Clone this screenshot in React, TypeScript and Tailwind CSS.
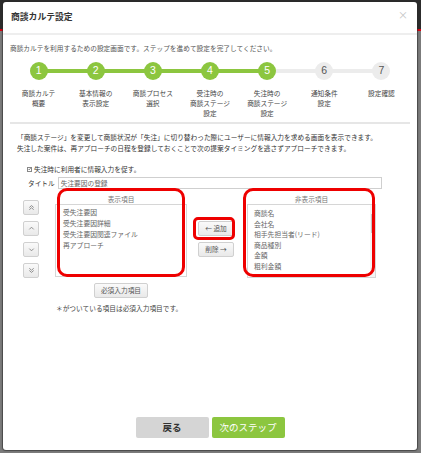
import React from "react";

const steps = [
  { n: 1, label: ["商談カルテ", "概要"], done: true },
  { n: 2, label: ["基本情報の", "表示設定"], done: true },
  { n: 3, label: ["商談プロセス", "選択"], done: true },
  { n: 4, label: ["受注時の", "商談ステージ", "設定"], done: true },
  { n: 5, label: ["失注時の", "商談ステージ", "設定"], done: true },
  { n: 6, label: ["通知条件", "設定"], done: false },
  { n: 7, label: ["設定確認"], done: false },
];

const shown = ["受失注要因", "受失注要因詳細", "受失注要因関連ファイル", "再アプローチ"];
const hidden = ["商談名", "会社名", "相手先担当者(リード)", "商品種別", "金額", "粗利金額"];

function Chevron({ dir, double }: { dir: "up" | "down"; double?: boolean }) {
  const up = dir === "up";
  return (
    <svg width="7" height="7" viewBox="0 0 8 8" fill="none" stroke="#8a8a8a" strokeWidth="1.1">
      {double ? (
        up ? (
          <>
            <path d="M1.5 4 L4 1.8 L6.5 4" />
            <path d="M1.5 6.5 L4 4.3 L6.5 6.5" />
          </>
        ) : (
          <>
            <path d="M1.5 1.5 L4 3.7 L6.5 1.5" />
            <path d="M1.5 4 L4 6.2 L6.5 4" />
          </>
        )
      ) : up ? (
        <path d="M1.5 5 L4 2.5 L6.5 5" />
      ) : (
        <path d="M1.5 3 L4 5.5 L6.5 3" />
      )}
    </svg>
  );
}

function SmallBtn({ children }: { children: React.ReactNode }) {
  return (
    <div className="w-[16px] h-[15px] flex items-center justify-center rounded-[2px] border border-[#d0d0d0] bg-gradient-to-b from-[#fafafa] to-[#e9e9e9]">
      {children}
    </div>
  );
}

export default function App() {
  return (
    <div className="relative w-[421px] h-[453px] overflow-hidden bg-[#7b7b7b] font-['Noto_Sans_CJK_JP','Noto_Sans',sans-serif]">
      <div className="h-[29px] bg-[#2c2c2c]" />
      <div className="h-[2px] bg-[#d8000f]" />

      <div className="absolute left-[3px] top-[2px] w-[414px] h-[448px] bg-white rounded-[3px] shadow-[0_0_1px_1px_rgba(40,40,40,0.6)] flex flex-col">
        {/* header */}
        <div className="h-[33px] shrink-0 border-b-[2px] border-[#eeeeee] flex items-center justify-between pl-[8px] pr-[9px] pb-[2px]">
          <span className="text-[8.8px] font-bold text-[#333]">商談カルテ設定</span>
          <span className="text-[#c4c4c4] text-[10px] leading-none -mt-[4px]">×</span>
        </div>

        {/* body */}
        <div className="flex-1 flex flex-col px-[7px]">
          <p className="mt-[8px] text-[6.7px] leading-[10px] text-[#555]">
            商談カルテを利用するための設定画面です。ステップを進めて設定を完了してください。
          </p>

          {/* steps */}
          <div className="relative mt-[9px]">
            <div className="absolute left-[28.5px] top-[7px] w-[229px] h-[4px] bg-[#8cc63f]" />
            <div className="absolute left-[257px] top-[7px] w-[115px] h-[4px] bg-[#ececec]" />
            <div className="relative grid grid-cols-7">
              {steps.map((s) => (
                <div key={s.n} className="flex flex-col items-center">
                  <div
                    className={
                      s.done
                        ? "w-[18px] h-[18px] rounded-full bg-[#8cc63f] text-white flex items-center justify-center text-[10.5px] font-['Liberation_Sans',sans-serif]"
                        : "w-[18px] h-[18px] rounded-full bg-[#ececec] text-[#555] flex items-center justify-center text-[10.5px] font-['Liberation_Sans',sans-serif]"
                    }
                  >
                    {s.n}
                  </div>
                  <div className="mt-[8px] text-center text-[6.7px] leading-[10px] text-[#444]">
                    {s.label.map((l, i) => (
                      <div key={i}>{l}</div>
                    ))}
                  </div>
                </div>
              ))}
            </div>
          </div>

          <div className="mt-[4px] h-[2px] bg-[#e6e6e6]" />

          <div className="mt-[8px] pl-[7px] text-[6.7px] leading-[11px] text-[#333]">
            <div>「商談ステージ」を変更して商談状況が「失注」に切り替わった際にユーザーに情報入力を求める画面を表示できます。</div>
            <div>失注した案件は、再アプローチの日程を登録しておくことで次の提案タイミングを逃さずアプローチできます。</div>
          </div>

          <div className="mt-[10px] pl-[17px] flex items-center gap-[2px] text-[6.7px] leading-[10px] text-[#333]">
            <span className="w-[5px] h-[5px] border border-[#888] bg-white flex items-center justify-center">
              <svg width="4" height="4" viewBox="0 0 4 4" fill="none" stroke="#333" strokeWidth="0.8">
                <path d="M0.5 2 L1.6 3.1 L3.5 0.8" />
              </svg>
            </span>
            <span>失注時に利用者に情報入力を促す。</span>
          </div>

          <div className="mt-[3px] pl-[18px] flex items-center gap-[3px]">
            <span className="text-[6.7px] leading-[10px] text-[#333]">タイトル</span>
            <div className="w-[324px] h-[12px] border border-[#cfcfcf] flex items-center pl-[2px] text-[6.7px] text-[#666]">
              失注要因の登録
            </div>
          </div>

          {/* lists */}
          <div className="mt-[5px] flex items-start">
            <div className="ml-[13px] mt-[6px] flex flex-col gap-[6px]">
              <SmallBtn>
                <Chevron dir="up" double />
              </SmallBtn>
              <SmallBtn>
                <Chevron dir="up" />
              </SmallBtn>
              <SmallBtn>
                <Chevron dir="down" />
              </SmallBtn>
              <SmallBtn>
                <Chevron dir="down" double />
              </SmallBtn>
            </div>

            <div className="ml-[16px] w-[132px] flex flex-col">
              <div className="text-center text-[6.7px] leading-[10px] text-[#777]">表示項目</div>
              <div className="h-[73px] border border-[#d6d6d6] pt-[2px] px-[7px] text-[6.8px] leading-[11px] text-[#666]">
                {shown.map((s) => (
                  <div key={s}>{s}</div>
                ))}
              </div>
              <div className="mt-[6px] self-center w-[54px] h-[15px] rounded-[2px] border border-[#d0d0d0] bg-gradient-to-b from-[#fafafa] to-[#e9e9e9] flex items-center justify-center text-[6.7px] text-[#555]">
                必須入力項目
              </div>
            </div>

            <div className="ml-[11px] mt-[27px] flex flex-col gap-[6px]">
              <div className="w-[36px] h-[15px] rounded-[2px] border border-[#d0d0d0] bg-gradient-to-b from-[#fafafa] to-[#e9e9e9] flex items-center justify-center text-[6.7px] text-[#555]">
                ← 追加
              </div>
              <div className="w-[36px] h-[15px] rounded-[2px] border border-[#d0d0d0] bg-gradient-to-b from-[#fafafa] to-[#e9e9e9] flex items-center justify-center text-[6.7px] text-[#555]">
                削除 →
              </div>
            </div>

            <div className="ml-[13px] w-[129px] flex flex-col">
              <div className="text-center text-[6.7px] leading-[10px] text-[#777]">非表示項目</div>
              <div className="relative h-[74px] border border-[#d6d6d6] overflow-hidden">
                <div className="pt-[3px] px-[6px] text-[6.8px] leading-[10.6px] text-[#666]">
                  {hidden.map((s) => (
                    <div key={s}>{s}</div>
                  ))}
                </div>
                <div className="absolute right-0 top-0 bottom-0 w-[5px] bg-[#f4f4f4]">
                  <div className="mt-[9px] h-[19px] w-[3px] mx-auto bg-[#c3c3c3]" />
                </div>
              </div>
            </div>
          </div>

          <div className="mt-[5px] pl-[46px] text-[6.7px] leading-[10px] text-[#444]">
            ＊がついている項目は必須入力項目です。
          </div>

          <div className="mt-auto mb-[12px] flex justify-center gap-[3px]">
            <div className="w-[73px] h-[21px] rounded-[2px] bg-[#d5d5d5] flex items-center justify-center text-[9.5px] font-bold text-[#333]">
              戻る
            </div>
            <div className="w-[73px] h-[21px] rounded-[2px] bg-[#8cc63f] flex items-center justify-center text-[9.5px] text-white">
              次のステップ
            </div>
          </div>
        </div>
      </div>

      {/* red annotation boxes */}
      <div className="absolute left-[57px] top-[188px] w-[128px] h-[89px] border-[3px] border-[#ee0000] rounded-[10px]" />
      <div className="absolute left-[243px] top-[188px] w-[132px] h-[89px] border-[3px] border-[#ee0000] rounded-[10px]" />
      <div className="absolute left-[193px] top-[217px] w-[42px] h-[23px] border-[3px] border-[#ee0000] rounded-[5px]" />
    </div>
  );
}
